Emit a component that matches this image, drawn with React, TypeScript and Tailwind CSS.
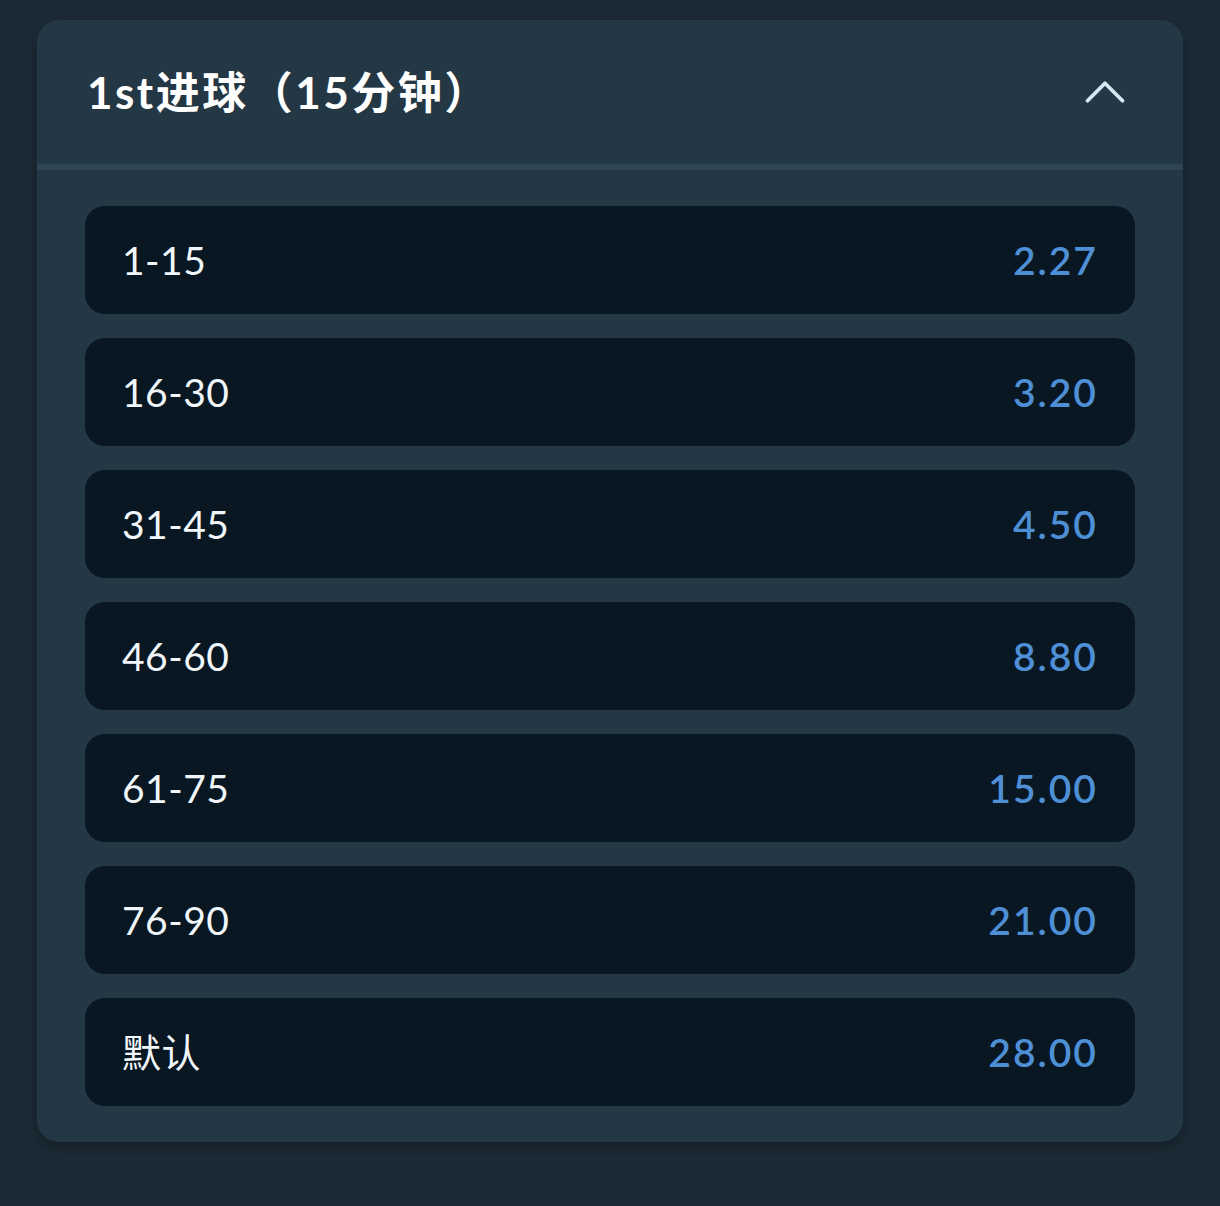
import { ChevronUp } from 'lucide-react'

interface Odd {
  label: string
  price: string
}

const odds: Odd[] = [
  { label: '1-15', price: '2.27' },
  { label: '16-30', price: '3.20' },
  { label: '31-45', price: '4.50' },
  { label: '46-60', price: '8.80' },
  { label: '61-75', price: '15.00' },
  { label: '76-90', price: '21.00' },
  { label: '默认', price: '28.00' },
]

const font = { fontFamily: 'Lato, "Noto Sans CJK SC", sans-serif' }

export default function App() {
  return (
    <div className="min-h-[1206px] w-full bg-[#1b2a35] pt-5 pl-[37px] pr-[37px]" style={font}>
      <div className="w-[1146px] overflow-hidden rounded-[22px] bg-[#233744] shadow-[0_6px_14px_rgba(0,0,0,0.25)]">
        {/* Header */}
        <div className="flex h-[144px] items-center justify-between pl-[50px] pr-[43px]">
          <h2 className="text-[44px] font-bold tracking-[2.5px] text-white">1st进球（15分钟）</h2>
          <ChevronUp className="h-[70px] w-[70px] text-[#d6e6f2]" strokeWidth={1.3} />
        </div>
        <div className="h-[6px] bg-[#2d4554]" />

        {/* Odds list */}
        <div className="flex flex-col gap-6 px-12 pb-9 pt-9">
          {odds.map((o) => (
            <button
              key={o.label}
              className="flex h-[108px] items-center justify-between rounded-[20px] bg-[#081722] px-[37px]"
            >
              <span className="text-[39px] tracking-[0.5px] text-[#f1f6fa]">{o.label}</span>
              <span className="text-[39px] font-semibold tracking-[2px] text-[#4f8fd6]">{o.price}</span>
            </button>
          ))}
        </div>
      </div>
    </div>
  )
}
